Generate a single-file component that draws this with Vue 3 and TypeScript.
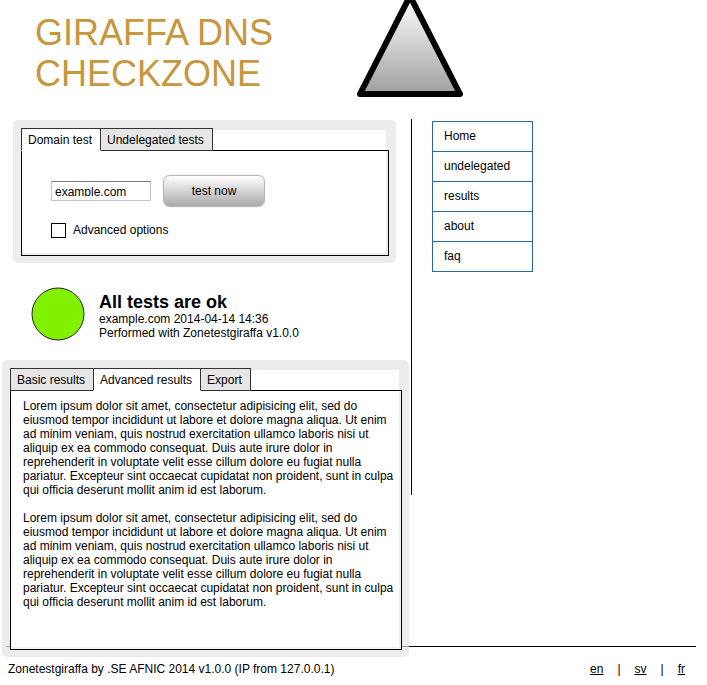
<script setup lang="ts">
import { ref } from 'vue'

interface MenuItem {
  label: string
  href: string
}

const domain = ref<string>('example.com')
const advanced = ref<boolean>(false)

const testTabs: string[] = ['Domain test', 'Undelegated tests']
const resultTabs: string[] = ['Basic results', 'Advanced results', 'Export']
const activeTest = ref<string>('Domain test')
const activeResult = ref<string>('Advanced results')

const menu: MenuItem[] = [
  { label: 'Home', href: '#home' },
  { label: 'undelegated', href: '#undelegated' },
  { label: 'results', href: '#results' },
  { label: 'about', href: '#about' },
  { label: 'faq', href: '#faq' },
]

const languages: string[] = ['en', 'sv', 'fr']

const lorem =
  'Lorem ipsum dolor sit amet, consectetur adipisicing elit, sed do eiusmod tempor incididunt ut labore et dolore magna aliqua. Ut enim ad minim veniam, quis nostrud exercitation ullamco laboris nisi ut aliquip ex ea commodo consequat. Duis aute irure dolor in reprehenderit in voluptate velit esse cillum dolore eu fugiat nulla pariatur. Excepteur sint occaecat cupidatat non proident, sunt in culpa qui officia deserunt mollit anim id est laborum.'
const paragraphs: string[] = [lorem, lorem]
</script>

<template>
  <div class="page">
    <header class="header">
      <h1 class="title">GIRAFFA DNS<br />CHECKZONE</h1>
      <svg class="logo" width="108" height="98" viewBox="0 0 108 98" aria-hidden="true">
        <defs>
          <linearGradient id="logo-fill" x1="0" y1="0" x2="0" y2="1">
            <stop offset="0" stop-color="#ffffff" />
            <stop offset="1" stop-color="#a0a0a0" />
          </linearGradient>
        </defs>
        <path
          d="M54 -4 L104 94 L4 94 Z"
          fill="url(#logo-fill)"
          stroke="#000"
          stroke-width="6"
          stroke-linejoin="round"
        />
      </svg>
    </header>

    <div class="columns">
      <main class="content">
        <section class="panel panel-test">
          <div class="tabs" role="tablist">
            <button
              v-for="tab in testTabs"
              :key="tab"
              type="button"
              role="tab"
              class="tab"
              :class="{ active: tab === activeTest }"
              :aria-selected="tab === activeTest"
              @click="activeTest = tab"
            >
              {{ tab }}
            </button>
          </div>
          <form class="body form" @submit.prevent>
            <div class="row">
              <div class="domain">
                <input v-model="domain" type="text" aria-label="Domain" />
              </div>
              <button class="submit" type="submit">test now</button>
            </div>
            <div class="option">
              <input id="advanced" v-model="advanced" class="check" type="checkbox" />
              <label for="advanced">Advanced options</label>
            </div>
          </form>
        </section>

        <section class="status">
          <svg class="light" width="54" height="54" viewBox="0 0 54 54" aria-hidden="true">
            <circle cx="27" cy="26" r="26" fill="#80f200" stroke="#222" stroke-width="1" />
          </svg>
          <div class="summary">
            <h2>All tests are ok</h2>
            <p>example.com 2014-04-14 14:36</p>
            <p>Performed with Zonetestgiraffa v1.0.0</p>
          </div>
        </section>

        <section class="panel panel-results">
          <div class="tabs" role="tablist">
            <button
              v-for="tab in resultTabs"
              :key="tab"
              type="button"
              role="tab"
              class="tab"
              :class="{ active: tab === activeResult }"
              :aria-selected="tab === activeResult"
              @click="activeResult = tab"
            >
              {{ tab }}
            </button>
          </div>
          <div class="body text">
            <p v-for="(paragraph, index) in paragraphs" :key="index">{{ paragraph }}</p>
          </div>
        </section>
      </main>

      <aside class="sidebar">
        <nav class="menu">
          <a v-for="item in menu" :key="item.label" :href="item.href">{{ item.label }}</a>
        </nav>
      </aside>
    </div>

    <footer class="footer">
      <span>Zonetestgiraffa by .SE AFNIC 2014 v1.0.0 (IP from 127.0.0.1)</span>
      <div class="languages">
        <template v-for="(language, index) in languages" :key="language">
          <span v-if="index > 0">|</span>
          <a :href="'#' + language">{{ language }}</a>
        </template>
      </div>
    </footer>
  </div>
</template>

<style>
body {
  margin: 0;
  background: #fff;
}
</style>

<style scoped>
.page {
  color: #000;
  font-family: 'Liberation Sans', Arial, Helvetica, sans-serif;
  font-size: 12px;
  line-height: 14px;
}

.page *,
.page *::before {
  box-sizing: border-box;
}

h1,
h2,
p {
  margin: 0;
}

button,
input {
  margin: 0;
  color: inherit;
  font: inherit;
}

.header {
  display: flex;
  align-items: flex-start;
  min-height: 119px;
  padding-left: 35px;
}

.title {
  flex: 0 0 321px;
  padding-top: 12px;
  color: #c6973d;
  font-size: 36px;
  font-weight: 400;
  line-height: 41px;
}

.logo {
  display: block;
  overflow: hidden;
}

.columns {
  display: grid;
  grid-template-columns: minmax(0, 411fr) minmax(0, 296fr);
  align-items: start;
}

/* The results panel hangs over the footer rule, which shows through its rim. */
.content {
  position: relative;
  z-index: 1;
  margin-bottom: -11px;
  padding-top: 1px;
}

.panel {
  padding: 8px 7px 7px 8px;
  border-radius: 5px;
  background: rgba(230, 230, 230, 0.7);
}

.panel-test {
  margin: 0 15px 0 13px;
}

.panel-results {
  margin: 0 2px;
}

.tabs {
  display: flex;
  margin-right: 3px;
  margin-bottom: -1px;
  background: linear-gradient(#e9e9e9 0 1px, #eee 1px 2px, #fff 2px);
}

.tab {
  position: relative;
  padding: 4px 8px 3px 6px;
  border: 1px solid #333;
  border-radius: 0;
  background: #e6e6e6;
  white-space: nowrap;
}

.tab + .tab {
  margin-left: -1px;
}

.tab.active {
  z-index: 1;
  border-bottom-color: #fff;
  background: #fff;
}

.body {
  border: 1px solid #000;
  background: #fff;
  box-shadow: inset -2px -2px #efefef;
}

.form {
  display: flex;
  flex-direction: column;
  gap: 16px;
  padding: 24px 29px 17px;
}

.row {
  display: flex;
  align-items: center;
  gap: 12px;
}

.domain {
  width: 100px;
  padding: 0 3px 4px;
  border: 1px solid #c4c4c4;
  border-top-color: #777;
}

.domain input {
  display: block;
  width: 100%;
  height: 14px;
  padding: 5px 0 0;
  border: 0;
  outline: none;
  background: transparent;
}

.submit {
  width: 102px;
  height: 32px;
  padding: 0;
  border: 1px solid #b8b8b8;
  border-radius: 7px;
  background: linear-gradient(#ffffff, #a9a9a9);
  box-shadow: 0 0 1px #aaa;
}

.option {
  display: flex;
  align-items: flex-start;
  gap: 7px;
}

.check {
  width: 15px;
  height: 15px;
  appearance: none;
  border: 1px solid #000;
  background: #fff;
}

.check:checked {
  box-shadow: inset 0 0 0 3px #fff;
  background: #000;
}

.status {
  display: flex;
  gap: 14px;
  padding: 25px 0 18px 31px;
}

.light {
  display: block;
  flex: none;
  overflow: visible;
}

.summary {
  padding-top: 4px;
}

.summary h2 {
  font-size: 18px;
  font-weight: 700;
  line-height: 20px;
}

.text {
  padding: 8px 4px 40px 12px;
}

.text p + p {
  margin-top: 14px;
}

.sidebar {
  min-height: 376px;
  padding: 2px 0 0 20px;
  border-left: 1px solid #000;
}

.menu {
  display: flex;
  flex-direction: column;
  width: 101px;
  border: 1px solid #286a98;
}

.menu a {
  padding: 7px 11px 8px;
  color: inherit;
  text-decoration: none;
}

.menu a + a {
  border-top: 1px solid #286a98;
}

.footer {
  display: flex;
  justify-content: space-between;
  margin: 0 11px 0 6px;
  padding: 15px 11px 8px 2px;
  border-top: 1px solid #000;
}

.languages {
  display: flex;
  gap: 14px;
}

.languages a {
  color: inherit;
}
</style>
